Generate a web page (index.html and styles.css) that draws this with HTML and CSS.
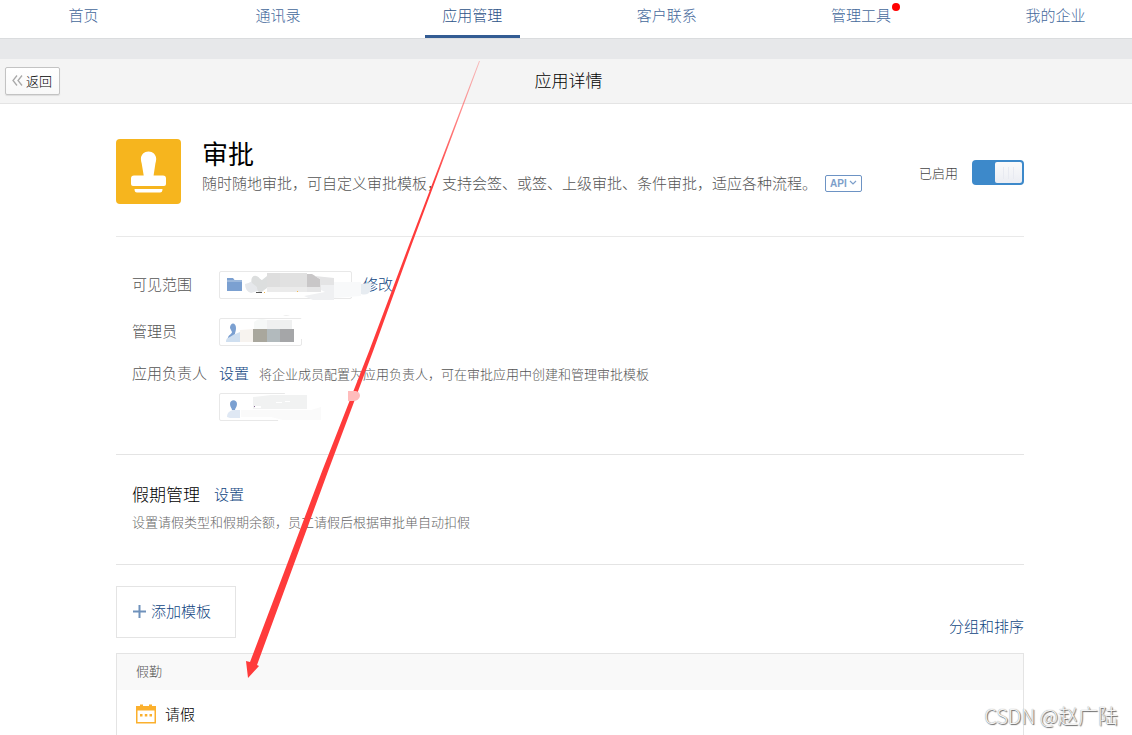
FILE: index.html
```html
<!DOCTYPE html>
<html lang="zh-CN">
<head>
<meta charset="utf-8">
<title>应用详情</title>
<link rel="stylesheet" href="styles.css">
</head>
<body>
<nav class="nav">
  <a class="nav-item" href="#">首页</a>
  <a class="nav-item" href="#">通讯录</a>
  <a class="nav-item nav-active" href="#">应用管理</a>
  <a class="nav-item" href="#">客户联系</a>
  <a class="nav-item" href="#"><span class="nav-label">管理工具<i class="nav-dot"></i></span></a>
  <a class="nav-item" href="#">我的企业</a>
</nav>
<header class="titlebar">
  <button class="back" type="button">
    <svg width="11" height="11" viewBox="0 0 11 11" fill="none" stroke="#a9a9a9" stroke-width="1.3"><path d="M5 .5 1 5.5l4 5M10 .5 6 5.5l4 5"/></svg>
    <span>返回</span>
  </button>
  <h1 class="title">应用详情</h1>
</header>
<main class="page">
  <section class="app">
    <svg class="app-icon" width="65" height="65" viewBox="0 0 65 65"><rect width="65" height="65" rx="4" fill="#f6b51e"/><path fill="#fff" d="M32.500 12.500c4.300 0 7.700 3.200 7.700 7.400 0 1.700-.4 3-.8 4.600L37.600 36.500h9.400q3 0 3 3V45q0 2-2 2H17q-2 0-2-2v-5.500q0-3 3-3h9.700L25.700 24.500c-.4-1.600-.8-2.900-.8-4.600 0-4.200 3.300-7.400 7.600-7.400zM18.500 50h28q0 3.500-2.500 3.500H21q-2.500 0-2.500-3.500z"/></svg>
    <div class="app-text">
      <h2 class="app-name">审批</h2>
      <p class="app-desc">随时随地审批，可自定义审批模板，支持会签、或签、上级审批、条件审批，适应各种流程。<button class="api" type="button">API<svg width="8" height="6" viewBox="0 0 8 6" fill="none" stroke="#7d9fca" stroke-width="1.200"><path d="m1 1 3 3 3-3"/></svg></button></p>
    </div>
    <label class="enable"><span>已启用</span><input class="switch" type="checkbox" checked></label>
  </section>
  <section class="info">
    <div class="row">
      <span class="label">可见范围</span>
      <span class="chip chip-wide">
        <svg class="chip-art" width="160" height="40" viewBox="0 0 160 40">
          <path fill="#7ba0d1" d="M8 12h6l1.500 2H23v11H8z"/><path fill="#fff" opacity=".5" d="M8 14.500h15v1H8z"/>
          <path fill="#fff" d="M48 27h60l26-4v8H86z"/>
          <path fill="#e6e8eb" d="M26 18q8-2 8-5h8v11l-10 3q-6-2-6-9z"/>
          <path fill="#dcdede" d="M33 17c-2-4 1-8 4-7 3 0 4 4 6 4l5-4v12l-7 5q-3-2-3-6z"/>
          <path fill="#dedede" d="M48 7h13v14H48z"/><path fill="#e1e1e1" d="M61 7h27v14H61z"/><path fill="#c9c7c8" d="M88 8h5l8 5v8H88z"/>
          <path fill="#ebebeb" d="M48 21h40v5H48z"/><path fill="#e4e4e5" d="M96 10l19 2v10h-14v-9z"/><path fill="#e6e6e7" d="M88 21h14v5H88z"/>
          <path fill="#eff0f2" d="M85 30l21-4-4-2v-5h13v15H94z"/><path fill="#f8f9fa" d="M115 16h27v14l-27 2z"/>
          <path fill="#e7ecf1" d="M142 18l10-1v7q-3 6-10 4z"/>
          <path fill="#555" d="M37 26h6v1h-6z"/><path fill="#f5b84a" d="M45 26h1v1h-1zM78 25h1v1h-1z"/>
        </svg>
      </span>
      <a class="link link-edit" href="#">修改</a>
    </div>
    <div class="row row-admin">
      <span class="label">管理员</span>
      <span class="chip chip-short">
        <svg class="chip-art" width="100" height="40" viewBox="0 0 100 40">
          <path fill="#fff" d="M36 6h51v20H75z"/>
          <path fill="#cfdff0" d="M7 29c0-4 3-6 7-7l7-3v10z"/><path fill="#7ba0d1" d="M11 15c0-6 6-6 6 0 0 3-1 4-1 6l-7 4c0-3 4-4 4-6z"/>
          <path fill="#f7f3ef" d="M21 17l13-1v13H21z"/><path fill="#f6f8f7" d="M35 9q5-5 13-2v9H35z"/><path fill="#eff0f0" d="M48 7h25v9H48z"/>
          <path fill="#a9a79d" d="M34 16h14v13H34z"/><path fill="#b2babd" d="M48 16h13v13H48z"/><path fill="#a5a6a8" d="M61 16h14v13H61z"/><path fill="#eee" d="M64 3q3-2 7 0z"/>
        </svg>
      </span>
    </div>
    <div class="row row-owner">
      <span class="label">应用负责人</span>
      <a class="link" href="#">设置</a>
      <span class="hint">将企业成员配置为应用负责人，可在审批应用中创建和管理审批模板</span>
    </div>
    <div class="row row-person">
      <span class="chip chip-person">
        <svg class="chip-art" width="110" height="40" viewBox="0 0 110 40">
          <path fill="#fff" d="M66 5h38v28H59z"/>
          <path fill="#dfe8f4" d="M8 29c0-5 4-7 7-7h6v8H11z"/><path fill="#7ba0d1" d="M11 16c0-5 7-5 7 0 0 3-2 4-2 6h-3c0-2-2-3-2-6z"/>
          <path fill="#f1f2f2" d="M34 9l18-2h36v14H34z"/><path fill="#fafafa" d="M22 22h70l10-3v13H64l-12-3H22z"/><path fill="#fff" d="M57 14h6v1h-6zM66 13h5v1h-5zM36 18h6v2h-6z"/><path fill="#846391" d="M35 18h1v1h-1z"/>
        </svg>
      </span>
    </div>
  </section>
  <section class="holiday">
    <div class="holiday-head"><h3 class="holiday-title">假期管理</h3><a class="link" href="#">设置</a></div>
    <p class="holiday-desc">设置请假类型和假期余额，员工请假后根据审批单自动扣假</p>
  </section>
  <div class="actions">
    <button class="add" type="button"><svg width="13" height="13" viewBox="0 0 13 13" stroke="#6f91bb" stroke-width="2"><path d="M6.500 0v13M0 6.500h13"/></svg>添加模板</button>
    <a class="link link-sort" href="#">分组和排序</a>
  </div>
  <section class="group">
    <h4 class="group-title">假勤</h4>
    <a class="item" href="#"><svg width="20" height="20" viewBox="0 0 20 20"><path fill="#fbb02d" fill-rule="evenodd" d="M0 2h4V.5h3V2h6V.5h3V2h4v17.500H0zM1.500 6.500V18h17V6.500z"/><path fill="#fbb02d" d="M4 10h2.500v2.500H4zM8.800 10h2.500v2.500H8.800zM13.500 10H16v2.500h-2.500z"/></svg>请假</a>
  </section>
</main>
<svg class="arrow" width="240" height="620" viewBox="240 60 240 620">
  <defs><linearGradient id="fade" x1="0" y1="0" x2="0" y2="1"><stop offset="0" stop-color="#ff3b3b" stop-opacity=".3"/><stop offset=".2" stop-color="#ff3b3b"/></linearGradient></defs>
  <path fill="url(#fade)" d="M479 61 409 245 369.500 350 322.500 470 283 575 250 662 246 661 248 678 259 666 257 665 290 575 328.500 470 373.500 350 411.500 245 480 61z"/>
  <path fill="#ffbcbc" d="M348 391h8q4 1 4 5-1 5-7 5h-5z"/>
</svg>
<div class="watermark">CSDN @赵广陆</div>
</body>
</html>
```
FILE: styles.css
```css
* { box-sizing: border-box; }
body {
  margin: 0;
  min-height: 100vh;
  display: flex;
  flex-direction: column;
  position: relative;
  background: #fff;
  color: #000;
  font: 300 15px/20px "Noto Sans CJK SC", sans-serif;
}
h1, h2, h3, h4, p { margin: 0; font-weight: 300; }
a { text-decoration: none; }
button { font: inherit; cursor: pointer; }
svg { flex: none; }

.nav {
  display: flex;
  justify-content: space-between;
  height: 39px;
  padding: 0 29px 0 36px;
  border-bottom: 1px solid #dadcde;
}
.nav-item {
  width: 95px;
  padding-top: 5px;
  text-align: center;
  color: #44689b;
  border-bottom: 3px solid transparent;
}
.nav-active { color: #2c5288; border-color: #335c93; }
.nav-label { position: relative; }
.nav-dot {
  position: absolute;
  top: -1px;
  right: -9px;
  width: 8px;
  height: 8px;
  border-radius: 50%;
  background: #f00;
}

.titlebar {
  display: grid;
  grid-template-columns: 1fr auto 1fr;
  align-items: center;
  padding: 0 0 0 5px;
  height: 65px;
  border-top: 20px solid #e7e8ea;
  border-bottom: 1px solid #e4e4e4;
  background: #f4f4f4;
}
.back {
  display: flex;
  align-items: center;
  gap: 3px;
  justify-self: start;
  height: 28px;
  padding: 0 7px 1px 6px;
  border: 1px solid #c3c3c3;
  border-radius: 2px;
  background: linear-gradient(#fff, #f8f8f8);
  box-shadow: 0 1px 1px #ddd;
  font-size: 13px;
  color: #000;
}
.title { padding-bottom: 2px; font-size: 17px; }

.page {
  flex: 1;
  display: flex;
  flex-direction: column;
  margin: 0 108px 0 116px;
}
.app {
  display: flex;
  padding: 35px 0 32px;
  border-bottom: 1px solid #e9e9e9;
}
.app-text { flex: 1; margin-left: 21px; }
.app-name { padding-bottom: 4px; font-size: 26px; line-height: 28px; font-weight: 400; }
.app-desc { display: flex; align-items: center; line-height: 24px; color: #555; white-space: nowrap; }
.api {
  display: flex;
  align-items: center;
  gap: 2px;
  height: 17px;
  margin-left: 8px;
  padding: 0 4px;
  border: 1px solid #6d93c4;
  border-radius: 2px;
  background: #fff;
  color: #7d9fca;
  font: 700 10px/15px "Liberation Sans", sans-serif;
}
.enable { display: flex; align-items: center; gap: 14px; padding-top: 2px; font-size: 13px; color: #444; }
.switch {
  appearance: none;
  display: flex;
  justify-content: flex-end;
  width: 52px;
  height: 25px;
  margin: 0;
  padding: 2px;
  border-radius: 4px;
  background: #3d89ca;
}
.switch::before {
  content: "";
  width: 27px;
  border-radius: 2px;
  background:
    linear-gradient(90deg, transparent 8px, #e8eaf1 8px 9px, transparent 9px 13px, #e8eaf1 13px 14px, transparent 14px 18px, #e8eaf1 18px 19px, transparent 19px) center / 100% 12px no-repeat,
    linear-gradient(#fafafb, #ebedf3);
}

.info { padding: 34px 0 33px 16px; border-bottom: 1px solid #e4e4e4; }
.row { display: flex; align-items: center; height: 28px; }
.row-admin { margin-top: 19px; }
.row-owner { margin-top: 14px; }
.row-person { margin-top: 5px; padding-left: 87px; }
.label { width: 87px; padding-bottom: 2px; color: #555; }
.chip { position: relative; height: 28px; border: 1px solid #e8e8e8; border-radius: 2px; }
.chip-wide { width: 133px; }
.chip-short { width: 83px; }
.chip-person { width: 96px; }
.chip-art { position: absolute; top: -6px; left: -1px; }
.link { color: #0f457f; }
.row .link { padding-bottom: 2px; }
.link-edit { margin-left: 11px; }
.hint { margin-left: 10px; font-size: 13px; color: #555; }

.holiday { padding: 28px 0 32px 16px; border-bottom: 1px solid #e4e4e4; }
.holiday-head { display: flex; align-items: center; gap: 14px; line-height: 22px; }
.holiday-title { font-size: 17px; }
.holiday-desc { margin-top: 7px; font-size: 13px; color: #666; }

.actions { display: flex; justify-content: space-between; align-items: flex-end; padding: 21px 0 15px; }
.add {
  display: flex;
  align-items: center;
  gap: 5px;
  height: 52px;
  padding: 0 24px 2px 16px;
  border: 1px solid #e4e4e4;
  background: #fff;
  color: #0f457f;
}
.link-sort { padding-bottom: 2px; }
.group { flex: 1; border: 1px solid #e4e4e4; border-bottom: 0; }
.group-title { padding: 7px 19px 9px; background: #f9f9f9; font-size: 13px; color: #555; }
.item { display: flex; align-items: center; gap: 9px; padding: 14px 19px 8px; color: #000; }

.arrow { position: absolute; top: 60px; left: 240px; pointer-events: none; }
.watermark {
  position: absolute;
  right: 14px;
  bottom: 6px;
  font-size: 20px;
  line-height: 26px;
  color: #f4f4f4;
  text-shadow: 1px 1px 1px #666, 0 0 1px #888;
}
```
